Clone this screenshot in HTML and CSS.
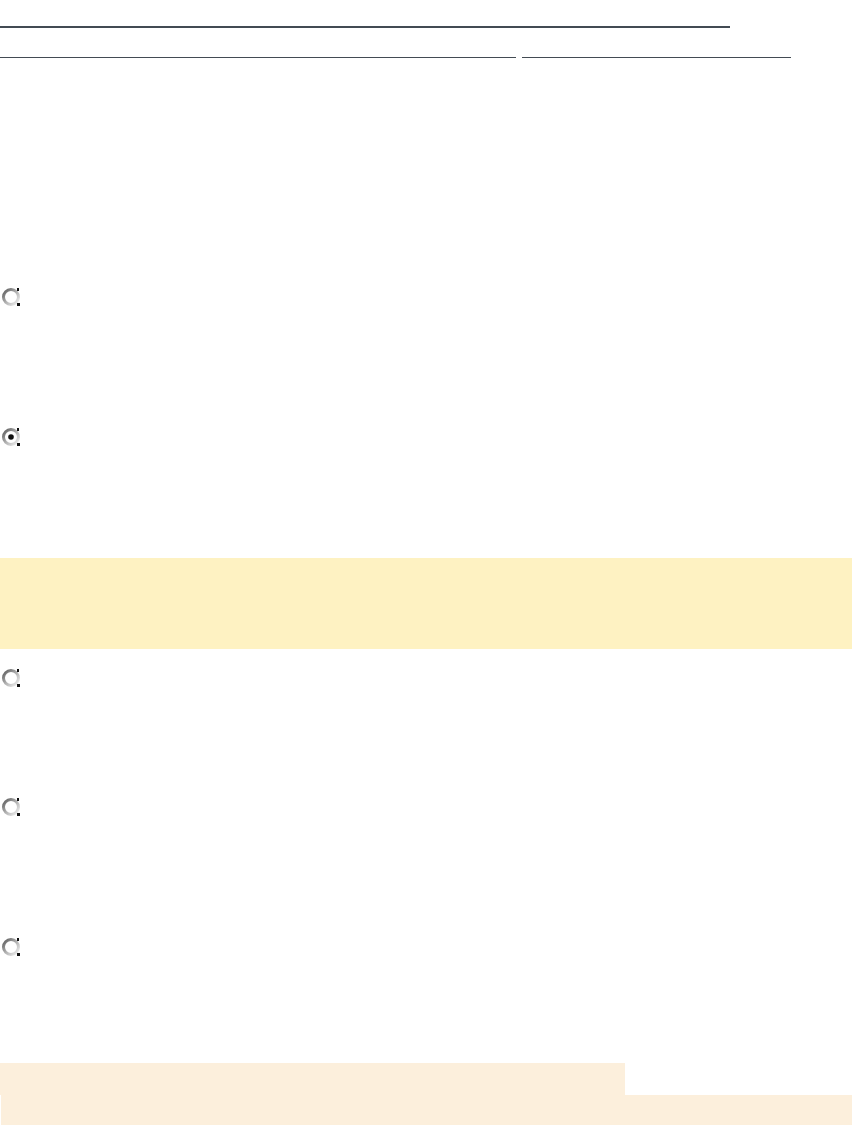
FILE: index.html
```html
<!DOCTYPE html>
<html lang="en">
<head>
    <meta charset="UTF-8">
    <meta name="viewport" content="width=device-width, initial-scale=1.0">
    <title>Survey</title>
    <link rel="stylesheet" href="styles.css">
</head>
<body>
    <div class="page">
        <div class="title-rule"></div>

        <div class="field-row">
            <div class="field field-wide"></div>
            <div class="field field-narrow"></div>
        </div>

        <div class="options">
            <div class="option option-first">
                <svg class="radio" width="20" height="20" viewBox="0 0 20 20">
                    <circle class="ring" cx="10" cy="10" r="7.5"/>
                    <rect x="16" y="1" width="2" height="3" fill="#111"/>
                    <rect x="16" y="16" width="3" height="3" fill="#111"/>
                </svg>
            </div>
            <div class="option">
                <svg class="radio" width="20" height="20" viewBox="0 0 20 20">
                    <circle class="ring" cx="10" cy="10" r="7.5"/>
                    <circle cx="10" cy="10" r="2.8" fill="#111"/>
                    <rect x="16" y="1" width="2" height="3" fill="#111"/>
                    <rect x="16" y="16" width="3" height="3" fill="#111"/>
                </svg>
            </div>
        </div>

        <div class="notice"></div>

        <div class="options">
            <div class="option option-after-notice">
                <svg class="radio" width="20" height="20" viewBox="0 0 20 20">
                    <circle class="ring" cx="10" cy="10" r="7.5"/>
                    <rect x="16" y="1" width="2" height="3" fill="#111"/>
                    <rect x="16" y="16" width="3" height="3" fill="#111"/>
                </svg>
            </div>
            <div class="option option-mid">
                <svg class="radio" width="20" height="20" viewBox="0 0 20 20">
                    <circle class="ring" cx="10" cy="10" r="7.5"/>
                    <rect x="16" y="1" width="2" height="3" fill="#111"/>
                    <rect x="16" y="16" width="3" height="3" fill="#111"/>
                </svg>
            </div>
            <div class="option">
                <svg class="radio" width="20" height="20" viewBox="0 0 20 20">
                    <circle class="ring" cx="10" cy="10" r="7.5"/>
                    <rect x="16" y="1" width="2" height="3" fill="#111"/>
                    <rect x="16" y="16" width="3" height="3" fill="#111"/>
                </svg>
            </div>
        </div>

        <div class="footer">
            <div class="footer-tab"></div>
            <div class="footer-bar"></div>
        </div>
    </div>

    <svg width="0" height="0" class="defs">
        <defs>
            <linearGradient id="ring" x1="0" y1="0" x2="1" y2="1">
                <stop offset="0" stop-color="#5a5a5a"/>
                <stop offset="0.5" stop-color="#b0b0b0"/>
                <stop offset="1" stop-color="#f4f4f4"/>
            </linearGradient>
        </defs>
    </svg>
</body>
</html>
```

FILE: styles.css
```css
* {
    margin: 0;
    padding: 0;
    box-sizing: border-box;
}

body {
    font-family: 'Liberation Sans', Arial, sans-serif;
    background: #fff;
    color: #333;
}

.page {
    width: 852px;
    height: 1126px;
    overflow: hidden;
    padding-top: 26px;
}

.title-rule {
    width: 730px;
    height: 2px;
    background: #434b53;
}

.field-row {
    display: flex;
    gap: 6px;
    margin-top: 29px;
}

.field {
    height: 1px;
    background: #434b53;
}

.field-wide {
    width: 516px;
}

.field-narrow {
    width: 269px;
}

.options {
    display: flex;
    flex-direction: column;
}

.option {
    padding-left: 1px;
    height: 20px;
}

.option-first {
    margin-top: 229px;
}

.option + .option {
    margin-top: 120px;
}

.radio {
    display: block;
}

.ring {
    fill: #fff;
    stroke: url(#ring);
    stroke-width: 3;
}

.defs {
    position: absolute;
}

.notice {
    margin-top: 111px;
    height: 91px;
    background: #fef2c2;
}

.option-after-notice {
    margin-top: 19px;
}

.options .option-mid {
    margin-top: 109px;
}

.footer {
    margin-top: 106px;
}

.footer-tab {
    width: 625px;
    height: 32px;
    background: #fcefdc;
}

.footer-bar {
    margin-left: 1px;
    height: 30px;
    background: #fcefdc;
}
```
